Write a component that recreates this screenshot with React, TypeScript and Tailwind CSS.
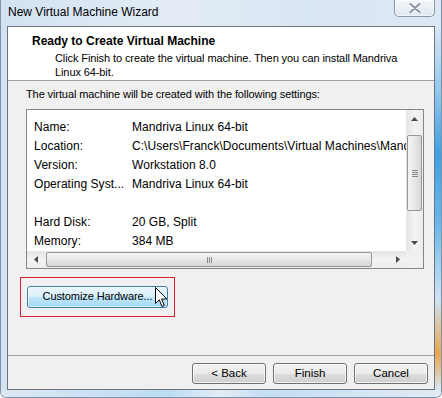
import React from 'react';

const rows: [string, string][] = [
  ['Name:', 'Mandriva Linux 64-bit'],
  ['Location:', 'C:\\Users\\Franck\\Documents\\Virtual Machines\\Mandriva Linux 64-bit'],
  ['Version:', 'Workstation 8.0'],
  ['Operating Syst...', 'Mandriva Linux 64-bit'],
  ['', ''],
  ['Hard Disk:', '20 GB, Split'],
  ['Memory:', '384 MB'],
];

const Arrow = ({ dir }: { dir: 'up' | 'down' | 'left' | 'right' }) => {
  const pts = {
    up: '0,4 3.5,0 7,4',
    down: '0,0 3.5,4 7,0',
    left: '4,0 0,3.5 4,7',
    right: '0,0 4,3.5 0,7',
  }[dir];
  const vertical = dir === 'up' || dir === 'down';
  return (
    <svg width={vertical ? 7 : 4} height={vertical ? 4 : 7} viewBox={vertical ? '0 0 7 4' : '0 0 4 7'}>
      <polygon points={pts} fill="#4a4a4a" />
    </svg>
  );
};

const WinButton = ({ label }: { label: string }) => (
  <button className="w-[74px] h-[21px] rounded-[3px] border border-[#707070] bg-[linear-gradient(to_bottom,#f2f2f2_0%,#ebebeb_50%,#dddddd_51%,#cfcfcf_100%)] shadow-[inset_0_0_0_1px_rgba(255,255,255,0.7)] text-[11.5px] leading-none text-black">
    {label}
  </button>
);

export default function App() {
  return (
    <div className="w-[442px] h-[398px] flex flex-col overflow-hidden rounded-b-[6px] border-x border-b border-[#7f93a8] bg-[linear-gradient(to_right,#d3e2f1,#e3ecf6_40%,#d9e6f3_70%,#dde8f4)] font-['Liberation_Sans',Arial,sans-serif] text-black">
      {/* title bar */}
      <div className="h-[26px] flex items-start justify-between">
        <div className="pl-[7px] pt-[5px] text-[12px] leading-[15px]">New Virtual Machine Wizard</div>
        <div className="mr-[6px] w-[41px] h-[17px] flex items-center justify-center rounded-b-[5px] border border-t-0 border-[#8797aa] bg-[linear-gradient(to_bottom,#f3f6fa,#dfe7f0)] shadow-[inset_0_0_0_1px_rgba(255,255,255,0.6)]">
          <svg width="12" height="10" viewBox="0 0 12 10">
            <path d="M1.5 1 L10.5 9 M10.5 1 L1.5 9" stroke="#ffffff" strokeWidth="4" strokeLinecap="round" />
            <path d="M1.5 1 L10.5 9 M10.5 1 L1.5 9" stroke="#8a96a3" strokeWidth="2.2" strokeLinecap="round" />
          </svg>
        </div>
      </div>

      <div className="flex-1 flex">
        <div className="w-[6px]" />
        {/* client area */}
        <div className="flex-1 flex flex-col border border-[#6d7580] bg-[#f0f0f0]">
          {/* header */}
          <div className="h-[54px] bg-white border-b border-[#a0a0a0] pt-[7px] pl-[24px]">
            <div className="text-[12px] font-bold leading-[15px]">Ready to Create Virtual Machine</div>
            <div className="pl-[23px] text-[11px] leading-[14px] tracking-[-0.1px] mt-[2px]">
              Click Finish to create the virtual machine. Then you can install Mandriva
              <br />
              Linux 64-bit.
            </div>
          </div>

          {/* body */}
          <div className="flex-1 pl-[18px] pt-[6px]">
            <div className="text-[11px] leading-[15px] tracking-[-0.1px]">
              The virtual machine will be created with the following settings:
            </div>

            <div className="mt-[7px] w-[398px] h-[160px] border border-[#828790] bg-white grid grid-cols-[379px_17px] grid-rows-[141px_17px]">
              <div className="overflow-hidden pt-[7px] pl-[7px] text-[12px] tracking-[0.05px]">
                {rows.map(([k, v], i) => (
                  <div key={i} className="h-[19px] flex items-center whitespace-nowrap">
                    <span className="w-[98px] shrink-0">{k}</span>
                    <span>{v}</span>
                  </div>
                ))}
              </div>

              {/* vertical scrollbar */}
              <div className="flex flex-col bg-[linear-gradient(to_right,#e4e4e4,#f3f3f3_50%,#ededed)]">
                <div className="h-[17px] flex items-center justify-center">
                  <Arrow dir="up" />
                </div>
                <div className="flex-1">
                  <div className="mt-[8px] mx-[1px] h-[76px] rounded-[2px] border border-[#979797] bg-[linear-gradient(to_right,#f5f5f5,#e8e8e8_50%,#d6d6d6)] flex flex-col items-center justify-center gap-[1px]">
                    <div className="w-[6px] h-[1px] bg-[#8a8a8a]" />
                    <div className="w-[6px] h-[1px] bg-[#8a8a8a]" />
                    <div className="w-[6px] h-[1px] bg-[#8a8a8a]" />
                    <div className="w-[6px] h-[1px] bg-[#8a8a8a]" />
                  </div>
                </div>
                <div className="h-[17px] flex items-center justify-center">
                  <Arrow dir="down" />
                </div>
              </div>

              {/* horizontal scrollbar */}
              <div className="flex bg-[linear-gradient(to_bottom,#e4e4e4,#f3f3f3_50%,#ededed)]">
                <div className="w-[17px] flex items-center justify-center">
                  <Arrow dir="left" />
                </div>
                <div className="flex-1 flex items-stretch py-[1px]">
                  <div className="ml-[2px] w-[326px] rounded-[2px] border border-[#979797] bg-[linear-gradient(to_bottom,#f5f5f5,#e8e8e8_50%,#d6d6d6)] flex items-center justify-center gap-[1px]">
                    <div className="w-[1px] h-[6px] bg-[#8a8a8a]" />
                    <div className="w-[1px] h-[6px] bg-[#8a8a8a]" />
                    <div className="w-[1px] h-[6px] bg-[#8a8a8a]" />
                  </div>
                </div>
                <div className="w-[17px] flex items-center justify-center">
                  <Arrow dir="right" />
                </div>
              </div>
              <div className="bg-[#f0f0f0]" />
            </div>

            {/* highlighted button */}
            <div className="relative mt-[8px] -ml-[6px] w-[155px] border border-[#d4202a] pt-[5px] pb-[8px] px-[6px]">
              <button className="w-[141px] h-[22px] rounded-[3px] border border-[#3c7fb1] bg-[linear-gradient(to_bottom,#eaf6fd_0%,#d9f0fc_50%,#bee6fd_51%,#a7d9f5_100%)] shadow-[inset_0_0_0_1px_rgba(255,255,255,0.6)] text-[11px] leading-none tracking-[-0.1px]">
                Customize Hardware...
              </button>
              <svg className="absolute left-[134px] top-[9px]" width="13" height="21" viewBox="0 0 13 21">
                <polygon
                  points="0.5,0.5 0.5,16.5 4.3,12.8 7,19.5 9.3,18.5 6.6,12 11.8,12"
                  fill="#ffffff"
                  stroke="#000000"
                  strokeWidth="1"
                  strokeLinejoin="miter"
                />
              </svg>
            </div>
          </div>

          {/* footer */}
          <div className="h-[34px] border-t border-[#a0a0a0] flex justify-end items-start gap-[7px] pt-[7px] pr-[6px]">
            <WinButton label="< Back" />
            <WinButton label="Finish" />
            <WinButton label="Cancel" />
          </div>
        </div>
        <div className="w-[6px] bg-[linear-gradient(to_bottom,#d8e6f3_0%,#9fcdef_15%,#3f9fe2_35%,#6db9eb_55%,#cfe3f3_75%,#e7a650_90%,#dbe7f3_100%)]" />
      </div>
      <div className="h-[7px] bg-[linear-gradient(to_right,#dce7f2,#bcdcf3_38%,#e3ecf5_50%,#c3def2_60%,#e1eaf4)]" />
    </div>
  );
}
